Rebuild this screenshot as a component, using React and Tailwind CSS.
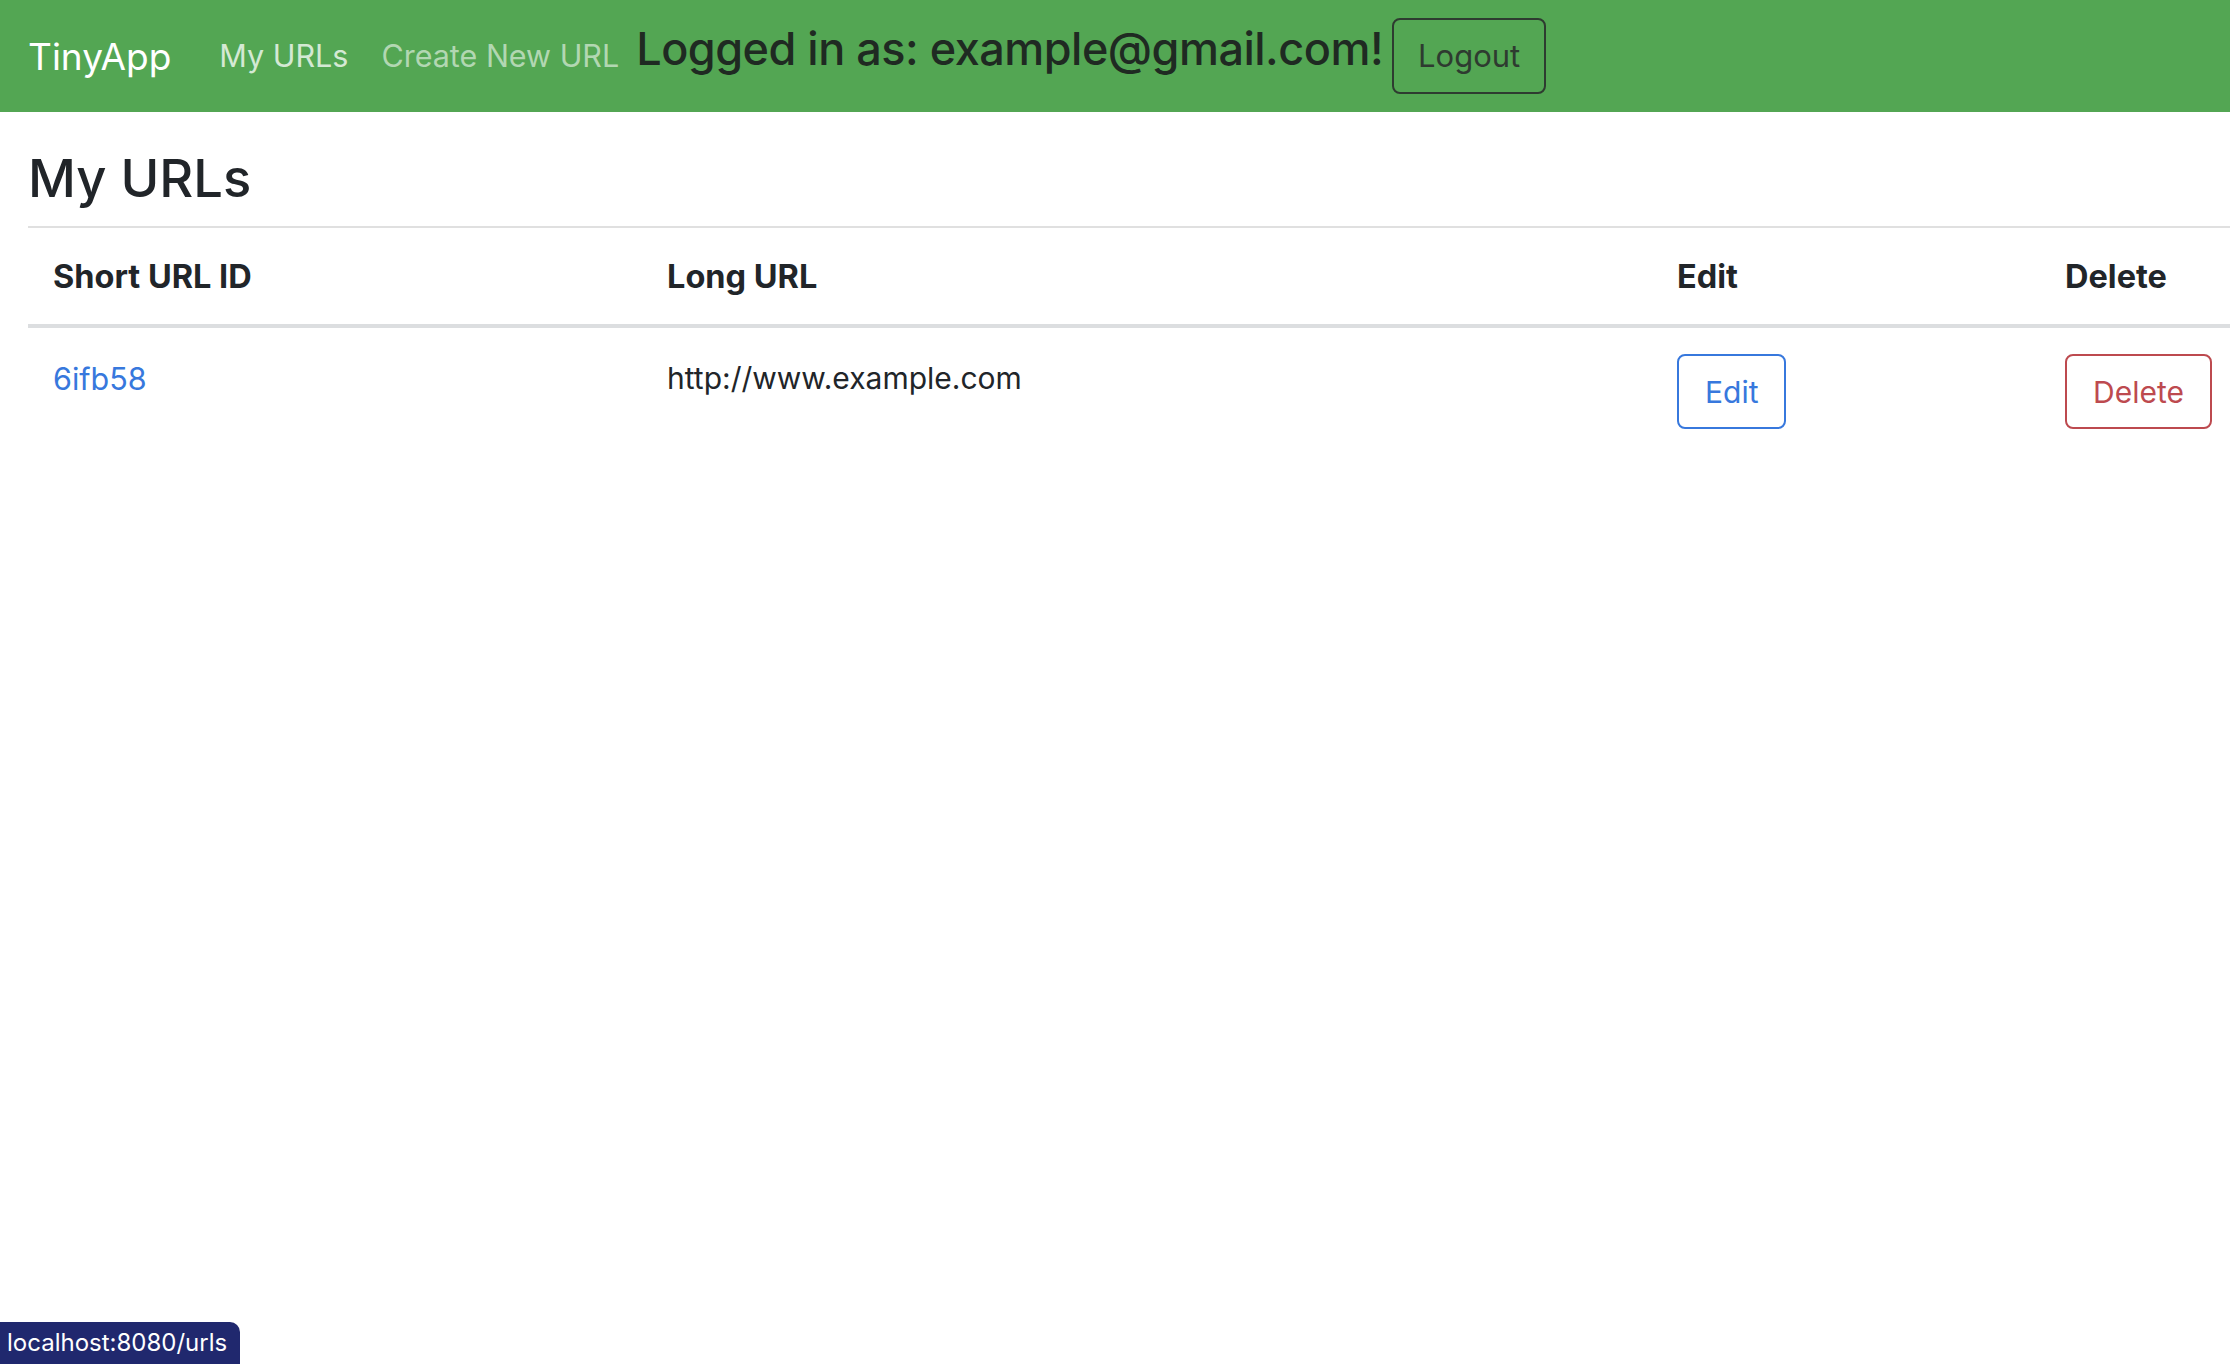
import React from 'react';

const urls = [{ id: '6ifb58', longURL: 'http://www.example.com' }];

function Navbar() {
  return (
    <nav className="h-[112px] bg-[#53a653] flex items-center pl-[28px]">
      <a href="#" className="text-[37px] text-white leading-none">TinyApp</a>
      <a href="#" className="ml-[48px] text-[30.5px] text-[#d4e9d4] leading-none">My URLs</a>
      <a href="#" className="ml-[33px] text-[30.5px] text-[#b2d7b2] leading-none">Create New URL</a>
      <h3 className="ml-[17px] mb-[15px] text-[45px] font-medium text-[#1f2a22] leading-none tracking-[-0.5px]">
        Logged in as: example@gmail.com!
      </h3>
      <button className="ml-[9px] h-[76px] px-[24px] border-2 border-[#2e3b30] rounded-[8px] text-[31px] text-[#2e3b30]">
        Logout
      </button>
    </nav>
  );
}

function UrlTable() {
  return (
    <table className="table-fixed w-[2208px] border-collapse text-[30px] text-[#212529]">
      <colgroup>
        <col className="w-[614px]" />
        <col className="w-[1010px]" />
        <col className="w-[388px]" />
        <col />
      </colgroup>
      <thead>
        <tr className="border-b-4 border-[#dcdee0] text-[32.5px]">
          <th className="text-left font-bold px-[25px] pt-[26px] pb-[25px] leading-[45px]">Short URL ID</th>
          <th className="text-left font-bold px-[25px] pt-[26px] pb-[25px] leading-[45px]">Long URL</th>
          <th className="text-left font-bold px-[25px] pt-[26px] pb-[25px] leading-[45px]">Edit</th>
          <th className="text-left font-bold px-[25px] pt-[26px] pb-[25px] leading-[45px]">Delete</th>
        </tr>
      </thead>
      <tbody>
        {urls.map((url) => (
          <tr key={url.id}>
            <td className="align-top px-[25px] pt-[28px] pb-[25px] leading-[45px]">
              <a href="#" className="text-[30.5px] text-[#3778dd]">{url.id}</a>
            </td>
            <td className="align-top px-[25px] pt-[28px] pb-[25px] leading-[45px]">{url.longURL}</td>
            <td className="align-top px-[25px] pt-[26px] pb-[25px]">
              <button className="h-[75px] px-[26px] border-2 border-[#3778dd] rounded-[8px] text-[#3778dd] leading-none">
                Edit
              </button>
            </td>
            <td className="align-top px-[25px] pt-[26px] pb-[25px]">
              <button className="h-[75px] px-[26px] border-2 border-[#bd4a4f] rounded-[8px] text-[#bd4a4f] leading-none">
                Delete
              </button>
            </td>
          </tr>
        ))}
      </tbody>
    </table>
  );
}

export default function App() {
  return (
    <div className="relative h-screen w-screen overflow-hidden bg-white font-['Inter',sans-serif]">
      <Navbar />
      <main className="pl-[28px]">
        <h1 className="mt-[35px] mb-[16px] text-[52.5px] font-medium text-[#212529] leading-[1.2]">My URLs</h1>
        <div className="h-[2px] bg-[#e0e0e0] w-[2208px]" />
        <UrlTable />
      </main>

      {/* browser status bubble */}
      <div className="absolute bottom-0 left-0 h-[42px] w-[240px] bg-[#20286e] rounded-tr-[10px] flex items-center pl-[7px] text-[24px] text-white">
        localhost:8080/urls
      </div>
    </div>
  );
}
